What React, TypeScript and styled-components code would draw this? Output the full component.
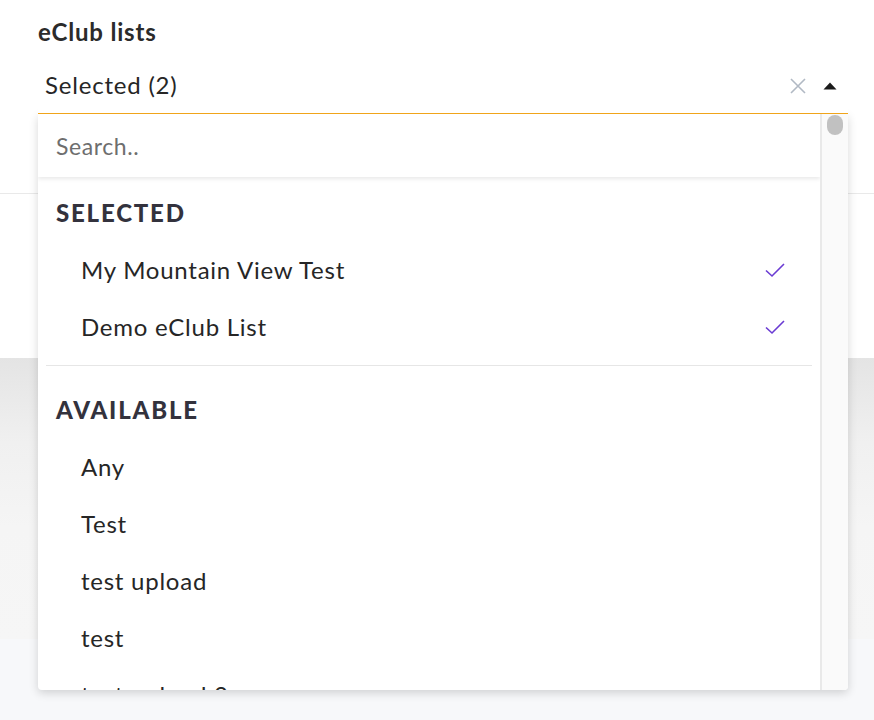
import styled, { createGlobalStyle } from "styled-components";

const GlobalStyle = createGlobalStyle`
    html, body {
        margin: 0;
        padding: 0;
        background: #f7f8fa;
    }
    body {
        font-family: "Lato", "Noto Sans", sans-serif;
        color: #262626;
    }
    * {
        box-sizing: border-box;
    }
`;

const Page = styled.div`
    width: 874px;
    height: 720px;
    display: flex;
    flex-direction: column;
    overflow: hidden;
`;

const Header = styled.header`
    height: 194px;
    flex-shrink: 0;
    background: #ffffff;
    padding: 17px 26px 0 38px;
    border-bottom: 1px solid #e9e9e9;
    position: relative;
    z-index: 2;
`;

const Panel = styled.section`
    height: 164px;
    flex-shrink: 0;
    background: #ffffff;
`;

const Band = styled.section`
    height: 281px;
    flex-shrink: 0;
    background: linear-gradient(#e4e4e4 0%, #f0f0f0 30%, #f5f5f5 60%, #f6f6f6 100%);
`;

const Footer = styled.footer`
    flex: 1;
    background: #f7f8fa;
`;

const Field = styled.div`
    position: relative;
`;

const Label = styled.label`
    display: block;
    font-size: 24px;
    line-height: 30px;
    font-weight: 700;
    letter-spacing: 0.8px;
    color: #2b2b2b;
    margin-bottom: 18px;
`;

const Control = styled.div`
    position: relative;
    z-index: 2;
    height: 49px;
    display: flex;
    align-items: center;
    padding: 0 11px 10px 7px;
    background: #ffffff;
    border-bottom: 1px solid #f0a41a;
`;

const Value = styled.span`
    flex: 1;
    font-size: 24px;
    letter-spacing: 0.8px;
    color: #262626;
`;

const Indicators = styled.div`
    display: flex;
    align-items: center;
    gap: 17px;
    margin-top: 4px;
`;

const Menu = styled.div`
    position: absolute;
    z-index: 1;
    top: 100%;
    left: 0;
    right: 0;
    height: 576px;
    display: flex;
    background: #ffffff;
    border-radius: 0 0 4px 4px;
    box-shadow: 0 3px 10px rgba(0, 0, 0, 0.16);
    overflow: hidden;
`;

const Content = styled.div`
    flex: 1;
    overflow: hidden;
`;

const Search = styled.input`
    display: block;
    width: 100%;
    height: 63px;
    border: none;
    outline: none;
    padding: 0 18px;
    font-family: inherit;
    font-size: 23px;
    letter-spacing: 0.6px;
    color: #262626;
    background: #ffffff;
    box-shadow: 0 2px 4px rgba(0, 0, 0, 0.09);
    position: relative;

    &::placeholder {
        color: #6e6e6e;
    }
`;

const GroupTitle = styled.div`
    padding: 20px 18px 12px;
    font-size: 24px;
    line-height: 32px;
    font-weight: 900;
    letter-spacing: 1.8px;
    color: #33323d;
    text-transform: uppercase;
`;

const Option = styled.div`
    height: 57px;
    display: flex;
    align-items: center;
    justify-content: space-between;
    padding: 0 35px 0 43px;
    font-size: 24px;
    letter-spacing: 0.75px;
    color: #262626;
`;

const Divider = styled.hr`
    border: none;
    border-top: 1px solid #e6e6e6;
    margin: 10px 8px 8px;
`;

const Scrollbar = styled.div`
    width: 28px;
    flex-shrink: 0;
    background: #fafafa;
    border-left: 2px solid #e9e9e9;
    padding: 1px 0 0 5px;
`;

const Thumb = styled.div`
    width: 16px;
    height: 20px;
    border-radius: 8px;
    background: #c1c1c1;
`;

const ClearIcon = () => (
    <svg width="16" height="16" viewBox="0 0 16 16">
        <path d="M1 1 L15 15 M15 1 L1 15" stroke="#b1b9c4" strokeWidth="1.6" fill="none" />
    </svg>
);

const CaretUp = () => (
    <svg width="14" height="8" viewBox="0 0 14 8">
        <path d="M7 0.5 L13.5 7.5 L0.5 7.5 Z" fill="#1a1a1a" />
    </svg>
);

const Check = () => (
    <svg width="20" height="16" viewBox="0 0 20 16">
        <polyline points="1,8.5 7,14 19,2" stroke="#6a3bd3" strokeWidth="1.6" fill="none" />
    </svg>
);

const selected = ["My Mountain View Test", "Demo eClub List"];
const available = ["Any", "Test", "test upload", "test", "test upload 2"];

function App() {
    return <>
        <GlobalStyle />
        <Page>
            <Header>
                <Field>
                    <Label>eClub lists</Label>
                    <Control>
                        <Value>Selected (2)</Value>
                        <Indicators>
                            <ClearIcon />
                            <CaretUp />
                        </Indicators>
                    </Control>
                    <Menu>
                        <Content>
                            <Search placeholder="Search.." />
                            <GroupTitle>Selected</GroupTitle>
                            {selected.map(name => (
                                <Option key={name}>
                                    {name}
                                    <Check />
                                </Option>
                            ))}
                            <Divider />
                            <GroupTitle>Available</GroupTitle>
                            {available.map(name => (
                                <Option key={name}>{name}</Option>
                            ))}
                        </Content>
                        <Scrollbar>
                            <Thumb />
                        </Scrollbar>
                    </Menu>
                </Field>
            </Header>
            <Panel />
            <Band />
            <Footer />
        </Page>
    </>;
}

export default App;
